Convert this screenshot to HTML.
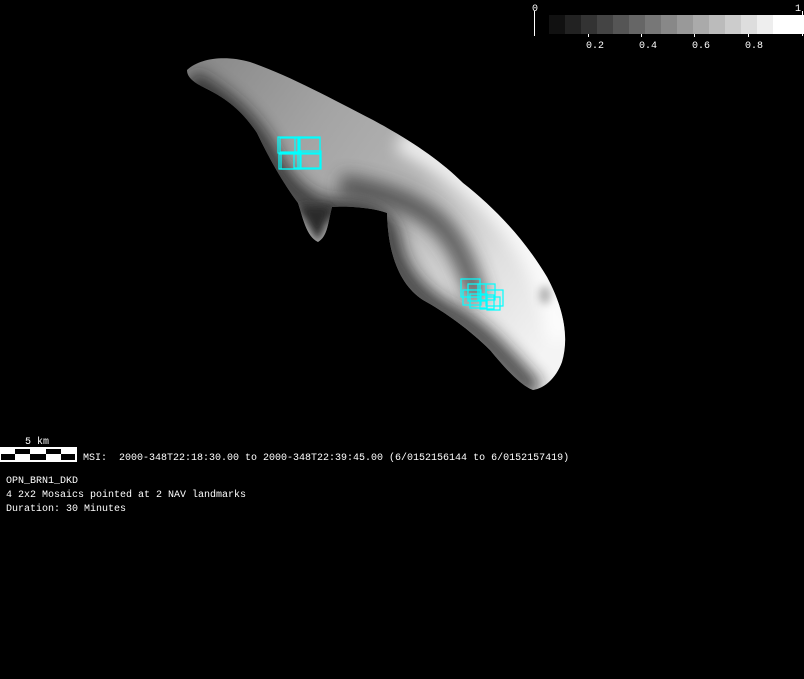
<!DOCTYPE html>
<html><head><meta charset="utf-8"><style>
html,body{margin:0;padding:0;background:#000;width:804px;height:679px;overflow:hidden}
svg{display:block}
text{font-family:"Liberation Mono","DejaVu Sans Mono",monospace;font-size:10px;fill:#fff}
</style></head><body>
<svg width="804" height="679" viewBox="0 0 804 679" xmlns="http://www.w3.org/2000/svg">
<defs>
<linearGradient id="g" x1="190" y1="70" x2="560" y2="330" gradientUnits="userSpaceOnUse">
<stop offset="0" stop-color="#888"/>
<stop offset="0.3" stop-color="#a4a4a4"/>
<stop offset="0.55" stop-color="#b4b4b4"/>
<stop offset="0.8" stop-color="#e0e0e0"/>
<stop offset="1" stop-color="#f4f4f4"/>
</linearGradient>
<clipPath id="c"><path d="M187,70 C200,58 225,55 250,62 C290,76 330,98 373,120 C410,140 440,160 463,183 C495,208 525,240 547,277 C562,305 570,335 562,362 C556,378 545,388 533,390 C520,385 505,368 490,350 C470,330 445,312 423,300 C400,285 388,255 387,213 C370,207 345,206 332,207 C328,222 328,236 318,242 C306,236 303,218 298,203 C283,183 270,160 257,133 C245,115 230,100 205,88 C195,83 187,78 187,70 Z"/></clipPath>
<filter id="b" x="-50%" y="-50%" width="200%" height="200%"><feGaussianBlur stdDeviation="8"/></filter>
<filter id="b2" x="-50%" y="-50%" width="200%" height="200%"><feGaussianBlur stdDeviation="4"/></filter>
</defs>
<g clip-path="url(#c)">
<rect x="150" y="40" width="450" height="380" fill="url(#g)"/>
<path d="M190,80 C215,95 245,115 265,150 C280,180 300,205 330,210 C360,208 385,212 390,240 C395,275 420,300 450,315 C480,330 505,360 535,392" fill="none" stroke="#1a1a1a" stroke-width="22" filter="url(#b)" opacity="0.8"/>
<path d="M298,205 L332,207 L318,242 Z" fill="#2a2a2a" filter="url(#b2)"/>
<path d="M340,185 C380,190 420,205 440,225 C460,245 470,275 478,300" fill="none" stroke="#3a3a3a" stroke-width="22" filter="url(#b)" opacity="0.75"/>
<path d="M400,140 C440,160 480,190 515,230 C540,262 555,300 558,340" fill="none" stroke="#ffffff" stroke-width="22" filter="url(#b)" opacity="0.8"/>
<ellipse cx="545" cy="295" rx="6" ry="9" fill="#999" filter="url(#b2)" opacity="0.7"/>
</g>
<g fill="none" stroke="#00ffff" stroke-width="1.2">
<rect x="278" y="137" width="22" height="16"/><rect x="280" y="138" width="19" height="15"/>
<rect x="295" y="138" width="25" height="16"/><rect x="298" y="137" width="22" height="16"/>
<rect x="279" y="154" width="21" height="15"/><rect x="281" y="152" width="20" height="17"/>
<rect x="298" y="151" width="23" height="18"/><rect x="294" y="153" width="26" height="15"/>
<rect x="461" y="279" width="19" height="18"/><rect x="468" y="284" width="18" height="17"/>
<rect x="478" y="284" width="17" height="16"/><rect x="486" y="290" width="17" height="16"/>
<rect x="463" y="290" width="18" height="15"/><rect x="470" y="294" width="17" height="14"/>
<rect x="480" y="295" width="14" height="14"/><rect x="487" y="297" width="13" height="13"/>
</g>
<g>
<rect x="549" y="15" width="16" height="19" fill="#111"/>
<rect x="565" y="15" width="16" height="19" fill="#222"/>
<rect x="581" y="15" width="16" height="19" fill="#333"/>
<rect x="597" y="15" width="16" height="19" fill="#444"/>
<rect x="613" y="15" width="16" height="19" fill="#555"/>
<rect x="629" y="15" width="16" height="19" fill="#666"/>
<rect x="645" y="15" width="16" height="19" fill="#777"/>
<rect x="661" y="15" width="16" height="19" fill="#888"/>
<rect x="677" y="15" width="16" height="19" fill="#999"/>
<rect x="693" y="15" width="16" height="19" fill="#aaa"/>
<rect x="709" y="15" width="16" height="19" fill="#bbb"/>
<rect x="725" y="15" width="16" height="19" fill="#ccc"/>
<rect x="741" y="15" width="16" height="19" fill="#ddd"/>
<rect x="757" y="15" width="16" height="19" fill="#eee"/>
<rect x="773" y="15" width="31" height="19" fill="#fff"/>
</g>
<g stroke="#fff" stroke-width="1">
<line x1="534.5" y1="11" x2="534.5" y2="36"/>
<line x1="802.5" y1="11" x2="802.5" y2="36"/>
<line x1="588.5" y1="34" x2="588.5" y2="37"/>
<line x1="641.5" y1="34" x2="641.5" y2="37"/>
<line x1="694.5" y1="34" x2="694.5" y2="37"/>
<line x1="748.5" y1="34" x2="748.5" y2="37"/>
</g>
<text x="532" y="11">0</text>
<text x="795" y="11">1</text>
<text x="586" y="48">0.2</text>
<text x="639" y="48">0.4</text>
<text x="692" y="48">0.6</text>
<text x="745" y="48">0.8</text>
<text x="25" y="444">5 km</text>
<rect x="0" y="447" width="77" height="15" fill="#fff"/>
<g fill="#000">
<rect x="15" y="449" width="15" height="5"/><rect x="46" y="449" width="15" height="5"/>
<rect x="1" y="454" width="14" height="6"/><rect x="30" y="454" width="16" height="6"/><rect x="61" y="454" width="14" height="6"/>
</g>
<text x="83" y="460" xml:space="preserve">MSI:  2000-348T22:18:30.00 to 2000-348T22:39:45.00 (6/0152156144 to 6/0152157419)</text>
<text x="6" y="483">OPN_BRN1_DKD</text>
<text x="6" y="497">4 2x2 Mosaics pointed at 2 NAV landmarks</text>
<text x="6" y="511">Duration: 30 Minutes</text>
</svg>
</body></html>
